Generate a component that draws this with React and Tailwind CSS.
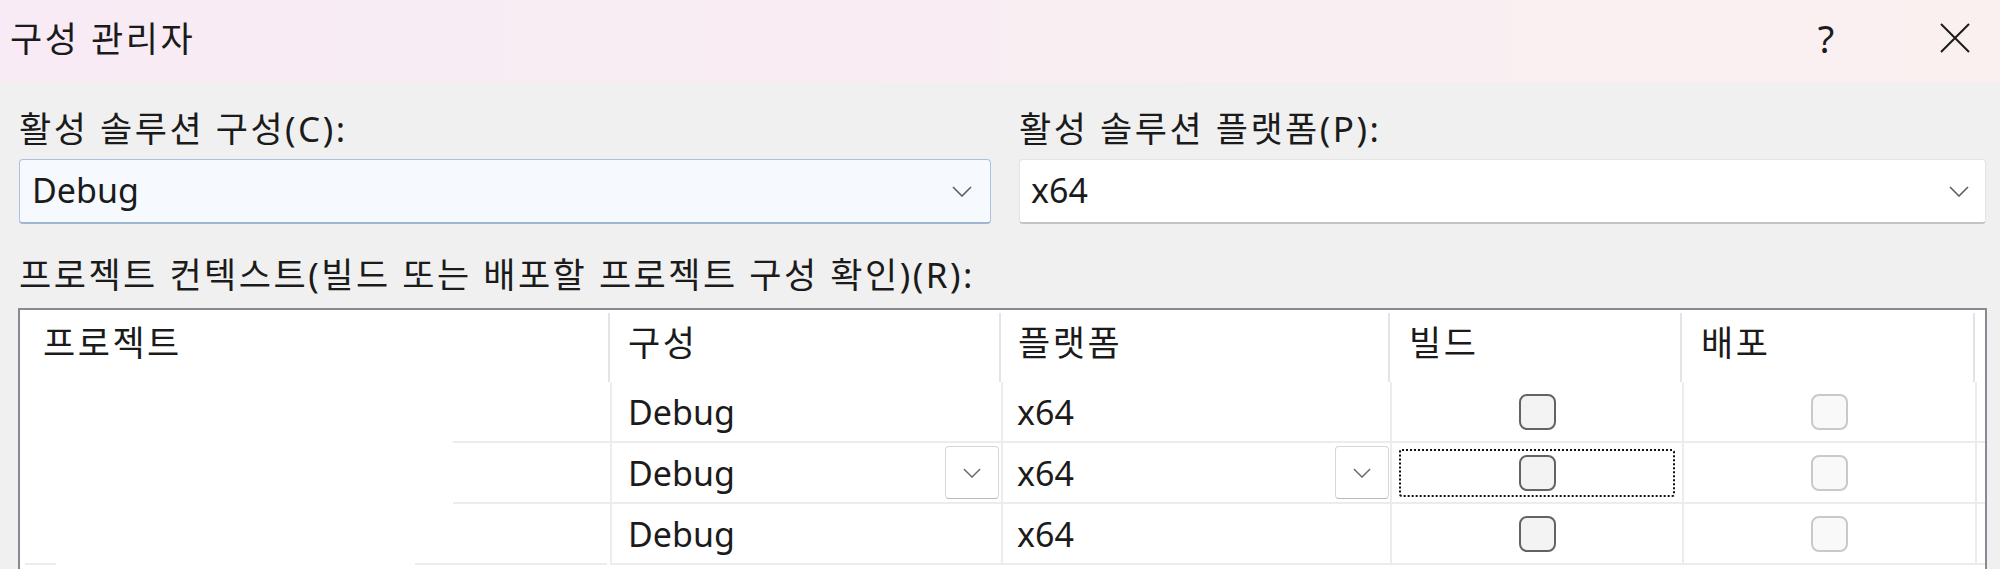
import React from 'react';

const FONT = "font-['Noto_Sans','Noto_Sans_CJK_KR',sans-serif]";
// Korean labels are drawn a touch larger and wider than the Latin cells
const KO = 'text-[35px] tracking-[2.5px] leading-none';

const Chevron = ({ className = 'w-[20px] h-[11px]', color = '#5f5f5f' }) => (
  <svg viewBox="0 0 20 11" className={className} fill="none">
    <path d="M1 1 L10 10 L19 1" stroke={color} strokeWidth="1.6" />
  </svg>
);

const Checkbox = ({ disabled }) => (
  <div
    className={
      disabled
        ? 'w-[37px] h-[36px] rounded-[8px] border-2 border-[#c9c9c9] bg-[#f9f9f9]'
        : 'w-[37px] h-[36px] rounded-[8px] border-2 border-[#636363] bg-[#f3f3f3]'
    }
  />
);

const DropButton = () => (
  <div className="w-[54px] h-[53px] flex items-center justify-center bg-white border border-[#d6d6d6] border-b-[#b9b9b9] rounded-[4px]">
    <Chevron className="w-[18px] h-[10px]" color="#6a6a6a" />
  </div>
);

const rows = [
  { focus: false },
  { focus: true },
  { focus: false, last: true },
];

const COLS = 'grid grid-cols-[590px_391px_389px_292px_293px_1fr]';

const App = () => {
  return (
    <div className={`w-[2000px] h-[569px] overflow-hidden bg-[#f0f0f0] text-[#1b1b1b] text-[34px] ${FONT}`}>
      {/* title bar */}
      <div className="h-[82px] flex items-center justify-between bg-gradient-to-r from-[#f8ebf5] to-[#faf0f0]">
        <div className={`pl-[10px] pb-[6px] ${KO}`}>구성 관리자</div>
        <div className="flex items-center gap-[59px] mr-[10px] pb-[6px]">
          <div className="w-[70px] flex justify-center text-[38px] leading-none">?</div>
          <div className="w-[70px] flex justify-center">
            <svg viewBox="0 0 32 32" className="w-[32px] h-[32px]" fill="none">
              <path d="M2 2 L30 30 M30 2 L2 30" stroke="#1b1b1b" strokeWidth="2" />
            </svg>
          </div>
        </div>
      </div>

      {/* solution config / platform */}
      <div className="flex gap-[28px] pl-[19px] mt-[26px]">
        <div className="w-[972px]">
          <div className={`h-[40px] flex items-center ${KO}`}>활성 솔루션 구성(C):</div>
          <div className="mt-[11px] h-[65px] flex items-center justify-between pl-[12px] pr-[18px] bg-[#f6f9fd] border border-[#a9c2e0] border-b-2 border-b-[#9fb6d2] rounded-[4px]">
            <span className="leading-none pb-[2px]">Debug</span>
            <Chevron />
          </div>
        </div>
        <div className="w-[967px]">
          <div className={`h-[40px] flex items-center ${KO}`}>활성 솔루션 플랫폼(P):</div>
          <div className="mt-[11px] h-[65px] flex items-center justify-between pl-[11px] pr-[16px] bg-white border border-[#e4e4e4] border-b-2 border-b-[#c4c4c4] rounded-[4px]">
            <span className="leading-none pb-[2px]">x64</span>
            <Chevron />
          </div>
        </div>
      </div>

      <div className={`pl-[19px] mt-[30px] h-[40px] flex items-center ${KO}`}>
        프로젝트 컨텍스트(빌드 또는 배포할 프로젝트 구성 확인)(R):
      </div>

      {/* project table */}
      <div className="ml-[18px] mt-[14px] w-[1969px] h-[300px] bg-white border-2 border-b-0 border-[#878b91]">
        <div className={`${COLS} h-[72px]`}>
          {['프로젝트', '구성', '플랫폼', '빌드', '배포'].map((h, i) => (
            <div
              key={h}
              className={`mt-[3px] border-r-2 border-[#e4e4e4] flex items-center pb-[10px] ${KO} ${
                i === 0 ? 'pl-[23px]' : i === 1 ? 'pl-[18px]' : i === 2 ? 'pl-[17px]' : 'pl-[19px]'
              }`}
            >
              {h}
            </div>
          ))}
          <div />
        </div>

        {rows.map((r, idx) => (
          <div key={idx} className={`${COLS} h-[61px]`}>
            {r.last ? (
              <div className="flex items-end justify-between">
                <div className="ml-[5px] w-[31px] h-[2px] bg-[#ececec]" />
                <div className="mr-[3px] w-[192px] h-[2px] bg-[#ececec]" />
              </div>
            ) : (
              <div className="flex items-end justify-end">
                <div className="w-[157px] h-[2px] bg-[#ececec]" />
              </div>
            )}
            <div className="border-l-2 border-b-2 border-[#ececec] flex items-center justify-between pl-[16px] pr-[2px]">
              <span className="leading-none">Debug</span>
              {r.focus && <DropButton />}
            </div>
            <div className="border-l-2 border-b-2 border-[#ececec] flex items-center justify-between pl-[14px] pr-[1px]">
              <span className="leading-none">x64</span>
              {r.focus && <DropButton />}
            </div>
            <div className="border-l-2 border-b-2 border-[#ececec] flex px-[7px] pt-[6px] pb-[5px]">
              <div
                className={`flex-1 flex items-center justify-center rounded-[3px] border-2 ${
                  r.focus ? 'border-dotted border-[#111]' : 'border-transparent'
                }`}
              >
                <Checkbox />
              </div>
            </div>
            <div className="border-l-2 border-b-2 border-[#ececec] flex items-center justify-center">
              <Checkbox disabled />
            </div>
            <div className="border-l-2 border-b-2 border-[#ececec]" />
          </div>
        ))}
      </div>
    </div>
  );
};

export default App;
